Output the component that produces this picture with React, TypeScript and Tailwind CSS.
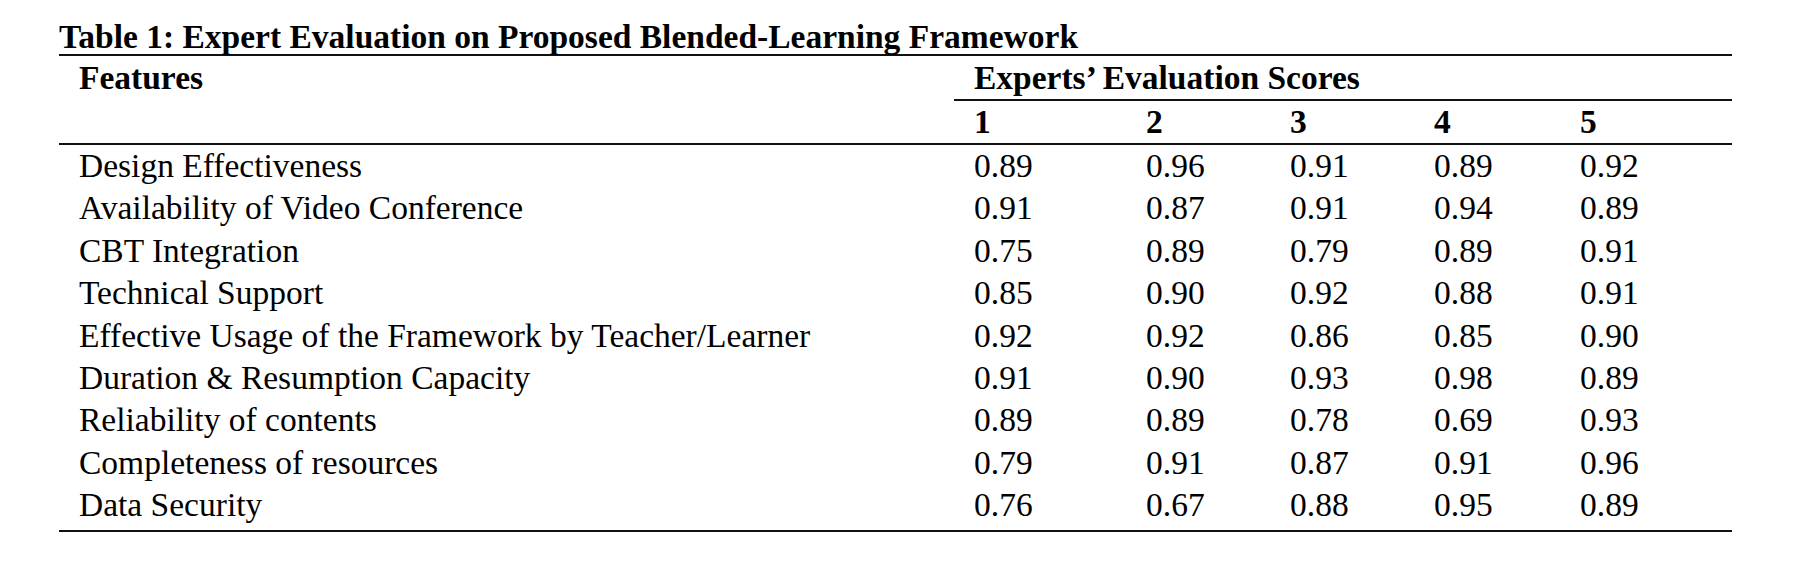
import React from "react";

const rows: [string, string[]][] = [
  ["Design Effectiveness", ["0.89", "0.96", "0.91", "0.89", "0.92"]],
  ["Availability of Video Conference", ["0.91", "0.87", "0.91", "0.94", "0.89"]],
  ["CBT Integration", ["0.75", "0.89", "0.79", "0.89", "0.91"]],
  ["Technical Support", ["0.85", "0.90", "0.92", "0.88", "0.91"]],
  ["Effective Usage of the Framework by Teacher/Learner", ["0.92", "0.92", "0.86", "0.85", "0.90"]],
  ["Duration & Resumption Capacity", ["0.91", "0.90", "0.93", "0.98", "0.89"]],
  ["Reliability of contents", ["0.89", "0.89", "0.78", "0.69", "0.93"]],
  ["Completeness of resources", ["0.79", "0.91", "0.87", "0.91", "0.96"]],
  ["Data Security", ["0.76", "0.67", "0.88", "0.95", "0.89"]],
];

const cols = "grid grid-cols-[895px_172px_144px_144px_146px_172px]";

export default function App() {
  return (
    <div className="w-[1801px] h-[565px] bg-white text-black font-['Liberation_Serif',serif] pl-[59px]">
      <div className="w-[1673px]">
        <div className="pt-[20px] text-[33.5px] leading-[34px] font-bold whitespace-nowrap">
          Table 1: Expert Evaluation on Proposed Blended-Learning Framework
        </div>
        <div className="h-[2px] bg-[#111]" />
        <div className={cols + " text-[33.5px] font-bold"}>
          <div className="pl-[20px] leading-[43px]">Features</div>
          <div className="col-span-5 pl-[20px] leading-[43px] border-b-2 border-[#111]">
            Experts’ Evaluation Scores
          </div>
          <div />
          {["1", "2", "3", "4", "5"].map((n) => (
            <div key={n} className="pl-[20px] leading-[42px]">
              {n}
            </div>
          ))}
        </div>
        <div className="h-[2px] bg-[#111]" />
        <div className="pb-[3px]">
          {rows.map(([label, vals]) => (
            <div key={label} className={cols + " text-[33.5px] leading-[42.4px]"}>
              <div className="pl-[20px] whitespace-nowrap">{label}</div>
              {vals.map((v, i) => (
                <div key={i} className="pl-[20px]">
                  {v}
                </div>
              ))}
            </div>
          ))}
        </div>
        <div className="h-[2px] bg-[#111]" />
      </div>
    </div>
  );
}
